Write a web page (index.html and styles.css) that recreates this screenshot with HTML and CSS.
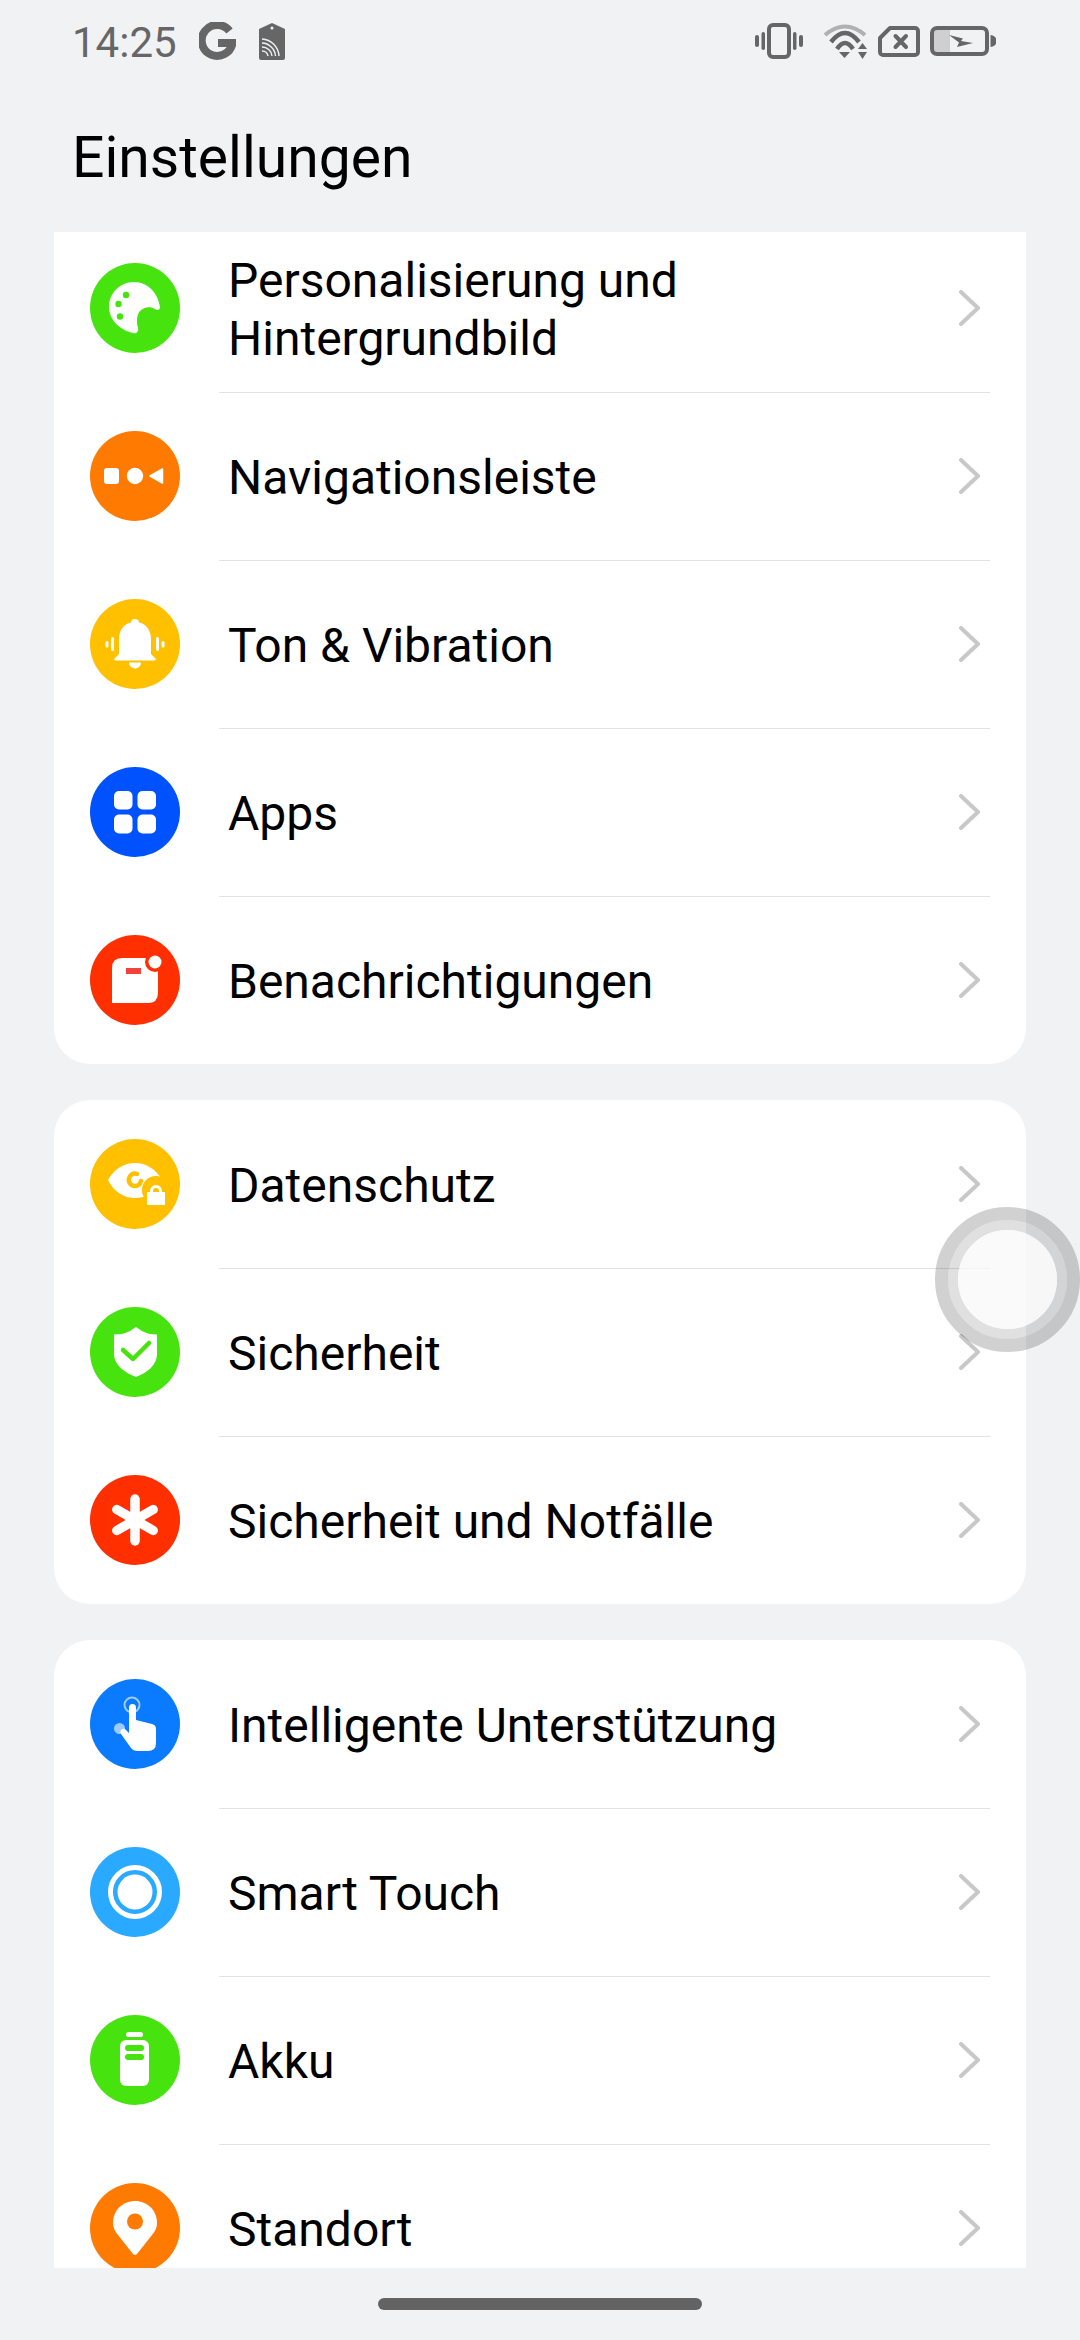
FILE: index.html
```html
<!DOCTYPE html>
<html lang="de">
<head>
    <meta charset="UTF-8">
    <meta name="viewport" content="width=device-width, initial-scale=1.0">
    <title>Einstellungen</title>
    <link rel="stylesheet" href="styles.css">
</head>
<body>
    <div class="status-bar">
        <div class="status-left">
            <span class="time">14:25</span>
            <svg class="icon-g" width="37" height="39" viewBox="0 0 37 39">
                <path d="M30.500 9A15.500 15.500 0 1 0 33.500 21H19" fill="none" stroke="#666" stroke-width="8"/>
            </svg>
            <svg class="icon-tag" width="26" height="37" viewBox="0 0 26 37">
                <path d="M13 0L26 6V35a2 2 0 0 1-2 2H2a2 2 0 0 1-2-2V6Z" fill="#666"/>
                <circle cx="13" cy="5" r="1.500" fill="#f1f2f4"/>
                <g fill="none" stroke="#f1f2f4" stroke-width="1.400">
                    <path d="M3 16A18 18 0 0 1 20 33"/>
                    <path d="M3 20A14 14 0 0 1 16.500 33"/>
                    <path d="M3 24A10 10 0 0 1 13 33"/>
                    <path d="M3 28A6 6 0 0 1 9 33"/>
                </g>
            </svg>
        </div>
        <div class="status-right">
            <svg class="icon-vib" width="48" height="36" viewBox="0 0 48 36">
                <rect x="14" y="2" width="20" height="32" rx="4" fill="none" stroke="#666" stroke-width="4"/>
                <g fill="#666">
                    <rect x="0" y="12" width="4" height="12" rx="2"/>
                    <rect x="6.500" y="9" width="3.500" height="18" rx="1.750"/>
                    <rect x="38" y="9" width="3.500" height="18" rx="1.750"/>
                    <rect x="44" y="12" width="4" height="12" rx="2"/>
                </g>
            </svg>
            <svg class="icon-wifi" width="45" height="36" viewBox="0 0 45 36">
                <path d="M2 12Q22 -5 42 12" fill="none" stroke="#b0b0b0" stroke-width="4"/>
                <path d="M8 19Q22 1 36 19" fill="none" stroke="#666" stroke-width="4.500"/>
                <path d="M14 26Q22 14 30 26" fill="none" stroke="#666" stroke-width="4.500"/>
                <path d="M16 29H27L21.500 35Z" fill="#666"/>
                <path d="M39.500 20L44 26H35Z" fill="#666"/>
                <path d="M35 29H44L39.500 36Z" fill="#666"/>
            </svg>
            <svg class="icon-sim" width="42" height="31" viewBox="0 0 42 31">
                <path d="M12 2H37a3 3 0 0 1 3 3V26a3 3 0 0 1-3 3H5a3 3 0 0 1-3-3V12Z" fill="none" stroke="#666" stroke-width="4" stroke-linejoin="round"/>
                <path d="M17.500 10L28 21M28 10L17.500 21" stroke="#666" stroke-width="4" stroke-linecap="round"/>
            </svg>
            <svg class="icon-bat" width="66" height="30" viewBox="0 0 66 30">
                <rect x="3" y="3" width="17" height="24" fill="#cfcfd1"/>
                <rect x="2" y="2" width="55" height="26" rx="5" fill="none" stroke="#666" stroke-width="4"/>
                <path d="M19 9L33 12.500L31 15L43 17L27 21L29 16.500Z" fill="#666"/>
                <path d="M60.500 9A6 6 0 0 1 60.500 21Z" fill="#666"/>
            </svg>
        </div>
    </div>

    <h1 class="page-title">Einstellungen</h1>

    <div class="list">
        <div class="card card-first">
            <div class="row">
                <svg class="row-icon" viewBox="0 0 90 90">
                    <circle cx="45" cy="45" r="45" fill="#47e30f"/>
                    <path d="M44 19C58 19 68 30 70 44C70 47 67 48 65 46C60 43 54 44 50 48C47 52 46 57 48 65C49 69 46 71 43 70C29 67 19 56 19 44C19 30 30 19 44 19Z" fill="#fff"/>
                    <circle cx="36" cy="32" r="3.200" fill="#47e30f"/>
                    <circle cx="28.500" cy="41" r="3.200" fill="#47e30f"/>
                    <circle cx="30" cy="53.500" r="3.200" fill="#47e30f"/>
                </svg>
                <span class="row-label">Personalisierung und<br>Hintergrundbild</span>
                <svg class="chevron" viewBox="0 0 24 36"><path d="M3 2L20 18L3 34"/></svg>
            </div>
            <div class="row">
                <svg class="row-icon" viewBox="0 0 90 90">
                    <circle cx="45" cy="45" r="45" fill="#ff7a00"/>
                    <rect x="14" y="37" width="15" height="16" rx="3" fill="#fff"/>
                    <circle cx="45" cy="45" r="8.200" fill="#fff"/>
                    <path d="M60 45L72.500 38V52Z" fill="#fff" stroke="#fff" stroke-width="1.500" stroke-linejoin="round"/>
                </svg>
                <span class="row-label">Navigationsleiste</span>
                <svg class="chevron" viewBox="0 0 24 36"><path d="M3 2L20 18L3 34"/></svg>
            </div>
            <div class="row">
                <svg class="row-icon" viewBox="0 0 90 90">
                    <circle cx="45" cy="45" r="45" fill="#ffc000"/>
                    <circle cx="45" cy="24" r="4" fill="#fff"/>
                    <path d="M45 23C55 23 61 30 61 40V55L66 60Q66 61.500 64 61.500H26Q24 61.500 24 60L29 55V40C29 30 35 23 45 23Z" fill="#fff"/>
                    <path d="M39 63.500H51A6 6 0 0 1 39 63.500Z" fill="#fff"/>
                    <g stroke="#fff" stroke-width="3" stroke-linecap="round">
                        <path d="M22.500 39.500V50.500"/><path d="M17 43.500V47"/><path d="M67.500 39.500V50.500"/><path d="M73 43.500V47"/>
                    </g>
                </svg>
                <span class="row-label">Ton &amp; Vibration</span>
                <svg class="chevron" viewBox="0 0 24 36"><path d="M3 2L20 18L3 34"/></svg>
            </div>
            <div class="row">
                <svg class="row-icon" viewBox="0 0 90 90">
                    <circle cx="45" cy="45" r="45" fill="#0052ff"/>
                    <rect x="24" y="24" width="18.500" height="18.500" rx="5" fill="#fff"/>
                    <rect x="47.500" y="24" width="18.500" height="18.500" rx="5" fill="#fff"/>
                    <rect x="24" y="47.500" width="18.500" height="19" rx="5" fill="#fff"/>
                    <rect x="47.500" y="47.500" width="18.500" height="19" rx="5" fill="#fff"/>
                </svg>
                <span class="row-label">Apps</span>
                <svg class="chevron" viewBox="0 0 24 36"><path d="M3 2L20 18L3 34"/></svg>
            </div>
            <div class="row">
                <svg class="row-icon" viewBox="0 0 90 90">
                    <circle cx="45" cy="45" r="45" fill="#ff2f00"/>
                    <path d="M32 23H58Q68 23 68 33V58Q68 68 58 68H22V33Q22 23 32 23Z" fill="#fff"/>
                    <circle cx="65" cy="27" r="10" fill="#ff2f00"/>
                    <circle cx="65" cy="27" r="6.500" fill="#fff"/>
                    <rect x="36" y="33" width="15" height="6" fill="#f4403a"/>
                </svg>
                <span class="row-label">Benachrichtigungen</span>
                <svg class="chevron" viewBox="0 0 24 36"><path d="M3 2L20 18L3 34"/></svg>
            </div>
        </div>

        <div class="card">
            <div class="row">
                <svg class="row-icon" viewBox="0 0 90 90">
                    <circle cx="45" cy="45" r="45" fill="#ffc000"/>
                    <path d="M18 41C24 30 34 24 45 24C56 24 66 30 72 41C66 53 56 59 45 59C34 59 24 53 18 41Z" fill="#fff"/>
                    <path d="M47 35A6.200 6.200 0 1 0 51 42" fill="none" stroke="#ffc000" stroke-width="4.500" stroke-linecap="round"/>
                    <circle cx="66" cy="51" r="14" fill="#ffc000"/>
                    <rect x="57" y="53" width="18" height="13" fill="#fff"/>
                    <path d="M61.500 54V52A4.500 4.500 0 0 1 70.500 52V54" fill="none" stroke="#fff" stroke-width="3"/>
                </svg>
                <span class="row-label">Datenschutz</span>
                <svg class="chevron" viewBox="0 0 24 36"><path d="M3 2L20 18L3 34"/></svg>
            </div>
            <div class="row">
                <svg class="row-icon" viewBox="0 0 90 90">
                    <circle cx="45" cy="45" r="45" fill="#47e30f"/>
                    <path d="M46 20L52 24C56 26.500 61 27.500 67 27.500V47C67 58 57 66 46 70C35 66 24 58 24 47V27.500C30 27.500 36 26.500 40 24Z" fill="#fff"/>
                    <path d="M33 43L43 52L59 36" fill="none" stroke="#47e30f" stroke-width="4.500" stroke-linecap="round" stroke-linejoin="round"/>
                </svg>
                <span class="row-label">Sicherheit</span>
                <svg class="chevron" viewBox="0 0 24 36"><path d="M3 2L20 18L3 34"/></svg>
            </div>
            <div class="row">
                <svg class="row-icon" viewBox="0 0 90 90">
                    <circle cx="45" cy="45" r="45" fill="#ff2f00"/>
                    <g stroke="#fff" stroke-width="9.500" stroke-linecap="round">
                        <path d="M45 24V66"/><path d="M26.800 34.500L63.200 55.500"/><path d="M63.200 34.500L26.800 55.500"/>
                    </g>
                </svg>
                <span class="row-label">Sicherheit und Notfälle</span>
                <svg class="chevron" viewBox="0 0 24 36"><path d="M3 2L20 18L3 34"/></svg>
            </div>
        </div>

        <div class="card card-last">
            <div class="row">
                <svg class="row-icon" viewBox="0 0 90 90">
                    <circle cx="45" cy="45" r="45" fill="#0a7bff"/>
                    <circle cx="42" cy="26" r="7.500" fill="none" stroke="#fff" stroke-opacity=".6" stroke-width="2"/>
                    <circle cx="29.500" cy="49.500" r="5.500" fill="#fff" fill-opacity=".6"/>
                    <path d="M39 28.500a3.500 3.500 0 0 1 7 0V41L62 45Q66 46 66 50V64Q66 72 58 72H48Q43 72 41 69L31 55Q29.500 52 31.500 50.500Q34 49 36 51L39 54Z" fill="#fff"/>
                </svg>
                <span class="row-label">Intelligente Unterstützung</span>
                <svg class="chevron" viewBox="0 0 24 36"><path d="M3 2L20 18L3 34"/></svg>
            </div>
            <div class="row">
                <svg class="row-icon" viewBox="0 0 90 90">
                    <circle cx="45" cy="45" r="45" fill="#29a9ff"/>
                    <circle cx="45" cy="45" r="24.500" fill="none" stroke="#fff" stroke-width="5"/>
                    <circle cx="45" cy="45" r="17.500" fill="#fff"/>
                </svg>
                <span class="row-label">Smart Touch</span>
                <svg class="chevron" viewBox="0 0 24 36"><path d="M3 2L20 18L3 34"/></svg>
            </div>
            <div class="row">
                <svg class="row-icon" viewBox="0 0 90 90">
                    <circle cx="45" cy="45" r="45" fill="#47e30f"/>
                    <rect x="36" y="17" width="17" height="5" rx="2.500" fill="#fff"/>
                    <rect x="30" y="25" width="29" height="46" rx="6" fill="#fff"/>
                    <rect x="35" y="30" width="19" height="6" rx="3" fill="#47e30f"/>
                    <rect x="35" y="39" width="19" height="6" rx="3" fill="#47e30f"/>
                </svg>
                <span class="row-label">Akku</span>
                <svg class="chevron" viewBox="0 0 24 36"><path d="M3 2L20 18L3 34"/></svg>
            </div>
            <div class="row">
                <svg class="row-icon" viewBox="0 0 90 90">
                    <circle cx="45" cy="45" r="45" fill="#ff7a00"/>
                    <path d="M45 18C57.500 18 67 27.500 67 40C67 45 65 48 62 52L47 71Q45 73 43 71L28 52C25 48 23 45 23 40C23 27.500 32.500 18 45 18Z" fill="#fff"/>
                    <circle cx="45" cy="38.500" r="8" fill="#ff7a00"/>
                </svg>
                <span class="row-label">Standort</span>
                <svg class="chevron" viewBox="0 0 24 36"><path d="M3 2L20 18L3 34"/></svg>
            </div>
        </div>
    </div>

    <div class="home-bar"></div>

    <div class="float-ball"><div class="float-ball-mid"><div class="float-ball-inner"></div></div></div>
</body>
</html>
```

FILE: styles.css
```css
body {
    font-family: Roboto, "Noto Sans", sans-serif;
    margin: 0;
    width: 1080px;
    height: 2340px;
    overflow: hidden;
    position: relative;
    display: flex;
    flex-direction: column;
    background-color: #f1f2f4;
}
.status-bar {
    height: 82px;
    padding: 0 84px 0 72px;
    display: flex;
    justify-content: space-between;
    align-items: center;
}
.status-left {
    display: flex;
    align-items: center;
}
.time {
    font-size: 42px;
    color: #666;
    line-height: 56px;
    margin-top: 4px;
}
.icon-g {
    margin-left: 22px;
}
.icon-tag {
    margin-left: 23px;
}
.status-right {
    display: flex;
    align-items: center;
    gap: 10px;
}
.icon-vib {
    margin-right: 10px;
}
.page-title {
    margin: 0;
    height: 150px;
    line-height: 152px;
    padding-left: 72px;
    font-size: 57px;
    font-weight: 400;
    color: #000;
}
.list {
    height: 2036px;
    overflow: hidden;
    margin: 0 54px;
    flex-shrink: 0;
}
.card {
    background-color: #ffffff;
    border-radius: 36px;
    margin-bottom: 36px;
    overflow: hidden;
}
.card-first {
    margin-top: -8px;
    border-radius: 0 0 36px 36px;
}
.card-last {
    margin-bottom: 0;
}
.row {
    height: 168px;
    display: flex;
    align-items: center;
    padding: 0 36px;
    position: relative;
}
.row:not(:last-child)::after {
    content: "";
    position: absolute;
    left: 165px;
    right: 36px;
    bottom: -1px;
    height: 1px;
    background-color: #e2e2e2;
}
.row-icon {
    width: 90px;
    height: 90px;
    flex-shrink: 0;
}
.row-label {
    flex: 1;
    margin-left: 48px;
    padding-top: 4px;
    font-size: 48px;
    line-height: 58px;
    color: #000;
}
.chevron {
    width: 24px;
    height: 36px;
    flex-shrink: 0;
    margin-right: 8px;
}
.chevron path {
    fill: none;
    stroke: #c8c8c8;
    stroke-width: 4;
    stroke-linecap: round;
    stroke-linejoin: round;
}
.home-bar {
    width: 324px;
    height: 12px;
    margin: 30px auto 0;
    border-radius: 6px;
    background-color: #636363;
}
.float-ball {
    position: absolute;
    left: 935px;
    top: 1207px;
    width: 145px;
    height: 145px;
    box-sizing: border-box;
    border: 13px solid rgba(0, 0, 0, 0.18);
    border-radius: 50%;
}
.float-ball-mid {
    height: 100%;
    box-sizing: border-box;
    border: 10px solid rgba(0, 0, 0, 0.12);
    border-radius: 50%;
}
.float-ball-inner {
    height: 100%;
    border-radius: 50%;
    background-color: rgba(248, 248, 249, 0.75);
}
```
